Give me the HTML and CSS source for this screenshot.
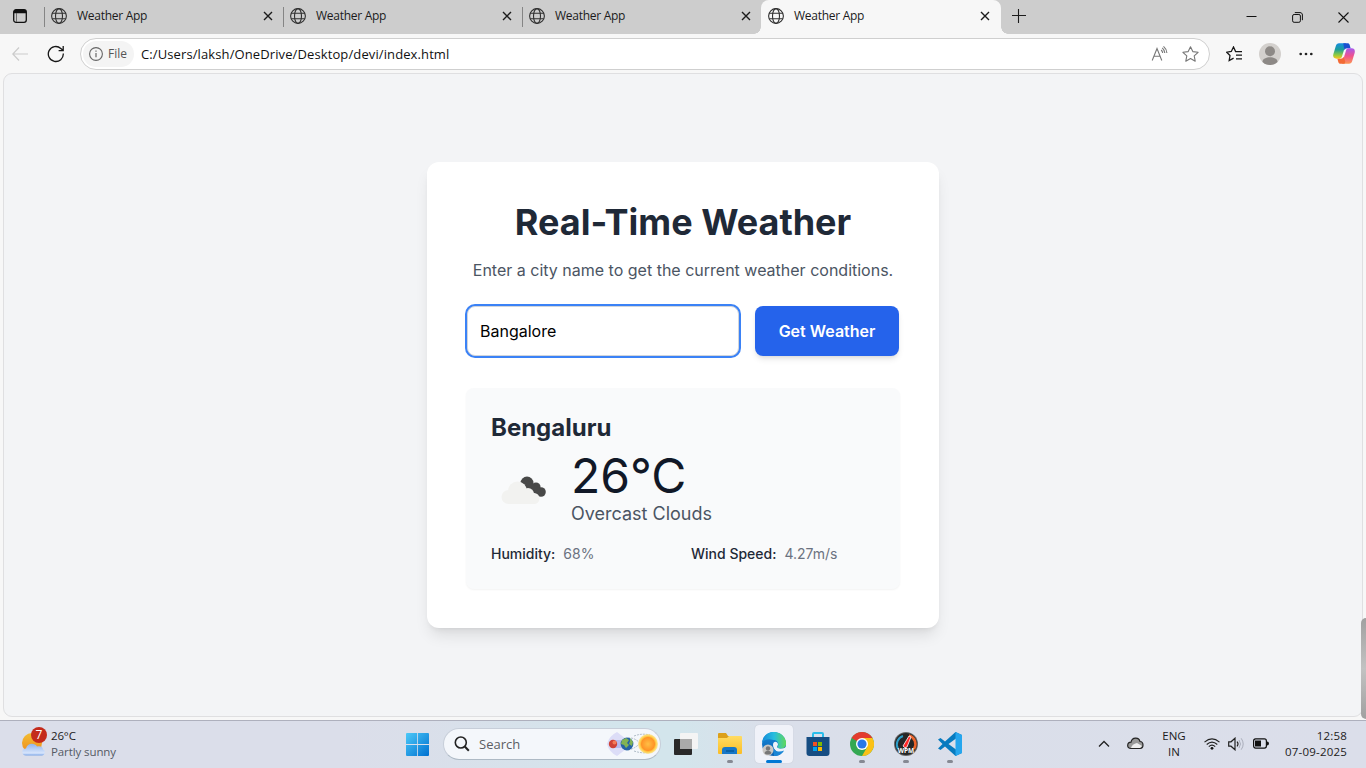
FILE: index.html
```html
<!DOCTYPE html>
<html lang="en">
<head>
<meta charset="utf-8">
<title>Weather App</title>
<link rel="stylesheet" href="styles.css">
</head>
<body>
<svg class="defs" width="0" height="0">
  <defs>
    <symbol id="globe" viewBox="0 0 16 16"><g fill="none" stroke="#303030" stroke-width="1.1"><circle cx="8" cy="8" r="7.4"/><ellipse cx="8" cy="8" rx="3.5" ry="7.4"/><path d="M1.2 5.3h13.6M1.2 10.7h13.6"/></g></symbol>
    <symbol id="close" viewBox="0 0 10 10"><path d="M1 1l8 8M9 1l-8 8" stroke="#1b1b1b" stroke-width="1.4" fill="none"/></symbol>
    <linearGradient id="win" x1="0" y1="0" x2="1" y2="1"><stop offset="0" stop-color="#4cc9f8"/><stop offset="1" stop-color="#0070d0"/></linearGradient>
    <linearGradient id="gold" x1="0" y1="0" x2="0" y2="1"><stop offset="0" stop-color="#ffdc63"/><stop offset="1" stop-color="#fbbd25"/></linearGradient>
    <linearGradient id="edgeA" x1="0" y1="0" x2="1" y2="0"><stop offset="0" stop-color="#168ad8"/><stop offset=".5" stop-color="#27bddf"/><stop offset="1" stop-color="#62d957"/></linearGradient>
    <linearGradient id="edgeB" x1="0" y1="0" x2="0" y2="1"><stop offset="0" stop-color="#168bdc"/><stop offset="1" stop-color="#0a5fb0"/></linearGradient>
    <radialGradient id="sun"><stop offset="0" stop-color="#ffbf45"/><stop offset=".65" stop-color="#ff9428"/><stop offset=".8" stop-color="#ffd04b"/><stop offset="1" stop-color="#ffdf77" stop-opacity=".7"/></radialGradient>
    <linearGradient id="cloud" x1="0" y1="0" x2="0" y2="1"><stop offset="0" stop-color="#8fb3ec"/><stop offset=".8" stop-color="#d7e5fc"/><stop offset="1" stop-color="#79a4e6"/></linearGradient>
    <linearGradient id="partSun" x1="0" y1="0" x2="0" y2="1"><stop offset="0" stop-color="#f2bd32"/><stop offset="1" stop-color="#ef8b1d"/></linearGradient>
    <linearGradient id="cpA" x1="0" y1="0" x2="0" y2="1"><stop offset="0" stop-color="#178de1"/><stop offset=".4" stop-color="#1b9d9b"/><stop offset=".75" stop-color="#8ecb40"/><stop offset="1" stop-color="#ffc51c"/></linearGradient>
    <linearGradient id="cpB" x1="0" y1="0" x2="0" y2="1"><stop offset="0" stop-color="#a659ee"/><stop offset=".5" stop-color="#f0528d"/><stop offset="1" stop-color="#fc9754"/></linearGradient>
  </defs>
</svg>
<div class="desktop">
  <header class="tabstrip">
    <div class="tab-menu"><svg width="14" height="14" viewBox="0 0 14 14"><rect x=".7" y=".7" width="12.6" height="12.6" rx="2.3" fill="none" stroke="#111" stroke-width="1.3"/><path d="M.7 4.3V3C.7 1.5 1.5.7 3 .7h8c1.500 0 2.300.8 2.300 2.300v1.300z" fill="#111"/><path d="M3.500 4v9" stroke="#555" stroke-width=".8"/></svg></div>
    <div class="tab"><svg class="globe"><use href="#globe"/></svg><span>Weather App</span><svg class="close"><use href="#close"/></svg></div>
    <div class="tab"><svg class="globe"><use href="#globe"/></svg><span>Weather App</span><svg class="close"><use href="#close"/></svg></div>
    <div class="tab"><svg class="globe"><use href="#globe"/></svg><span>Weather App</span><svg class="close"><use href="#close"/></svg></div>
    <div class="tab active"><svg class="globe"><use href="#globe"/></svg><span>Weather App</span><svg class="close"><use href="#close"/></svg></div>
    <svg class="plus" width="14" height="14" viewBox="0 0 14 14"><path d="M6.500 0v14M0 6.500h14" stroke="#1b1b1b" stroke-width="1.1"/></svg>
    <div class="window-controls">
      <svg width="11" height="11" viewBox="0 0 11 11"><path d="M.5 4.500h10" stroke="#111"/></svg>
      <svg width="11" height="11" viewBox="0 0 11 11"><g fill="none" stroke="#111"><rect x=".6" y="2.500" width="7.800" height="7.800" rx="1.500"/><path d="M2.800.6H8c1.500 0 2.400.9 2.400 2.400v5.200"/></g></svg>
      <svg width="11" height="11" viewBox="0 0 11 11"><path d="M.5.5l10 10M10.500.5l-10 10" stroke="#111" stroke-width="1.100"/></svg>
    </div>
  </header>

  <div class="toolbar">
    <svg class="back" width="16" height="14" viewBox="0 0 16 14"><path d="M7 .5L.8 7 7 13.500M1 7h15" fill="none" stroke="#cbcbcb" stroke-width="1.200"/></svg>
    <svg class="reload" width="18" height="18" viewBox="0 0 18 18"><path d="M16.300 8.500A7.500 7.500 0 1 1 13.800 3.400L16 5.300M16.200 1v4.600h-4.600" fill="none" stroke="#171717" stroke-width="1.300"/></svg>
    <div class="address">
      <div class="file-chip"><svg width="14" height="14" viewBox="0 0 14 14"><circle cx="7" cy="7" r="6.400" fill="none" stroke="#666" stroke-width="1.100"/><path d="M7 6v4.300M7 3.500v1.300" stroke="#666" stroke-width="1.200"/></svg><span>File</span></div>
      <span class="url">C:/Users/laksh/OneDrive/Desktop/devi/index.html</span>
      <svg class="read" width="17" height="16" viewBox="0 0 17 16"><g fill="none" stroke="#777" stroke-width="1.100"><path d="M1.200 14.500L6 2.500l4.800 12M2.900 10.300h6.200M10.200 4q1.300 1.200 1.500 3M11.200 1.900q2.300 2 2.600 5.100M12.500.4q3.100 2.600 3.400 6.600"/></g></svg>
      <svg class="star" width="17" height="16" viewBox="0 0 17 16"><path d="M8.500.8l2.300 4.800 5.300.7-3.900 3.600 1 5.300-4.700-2.600-4.700 2.600 1-5.300L.9 6.300l5.300-.7z" fill="none" stroke="#777" stroke-width="1.100" stroke-linejoin="round"/></svg>
    </div>
    <div class="tools">
      <svg width="17" height="16" viewBox="0 0 17 16"><path d="M10.800 5.600H9.600L7.500 1 5.300 5.500.7 6.200 4 9.500l-.8 5 4.400-2.300M10.800 5.600H16M10 9.200h6M10 12.800h6" fill="none" stroke="#161616" stroke-width="1.300"/></svg>
      <svg width="22" height="22" viewBox="0 0 22 22"><circle cx="11" cy="11" r="11" fill="#d3d0cd"/><circle cx="11" cy="8.300" r="5" fill="#8d8986"/><path d="M3.500 19c-.5-6.500 15.500-6.500 15 0-3.700 4-11.300 4-15 0z" fill="#8d8986"/></svg>
      <svg width="14" height="4" viewBox="0 0 14 4"><g fill="#222"><circle cx="1.700" cy="2" r="1.350"/><circle cx="7" cy="2" r="1.350"/><circle cx="12.300" cy="2" r="1.350"/></g></svg>
      <svg width="22" height="21" viewBox="0 0 22 21"><path d="M6 .3h7L9 13.600c-.5 1.500-1.300 2.100-2.800 2.100H3.500C.6 15.700-.3 13.700.4 11L2.800 3C3.400 1.200 4.300.3 6 .3z" fill="url(#cpA)"/><path d="M10.300.2h4.200c1.200 0 1.900.6 2.200 1.800l.9 3.300h-3.300c-1.400 0-2.400.7-2.900 2z" fill="#1a50cf"/><path d="M16 20.700H9l4-13.300c.5-1.500 1.300-2.100 2.800-2.100h2.700c2.900 0 3.800 2 3.100 4.700L19.200 18c-.6 1.800-1.500 2.700-3.200 2.700z" fill="url(#cpB)"/><path d="M4.400 15.700h3.300c1.400 0 2.400-.7 2.900-2l1.700 5-.8 2H7.500c-1.200 0-1.900-.6-2.200-1.800z" fill="#f36a35"/></svg>
    </div>
  </div>

  <main class="viewport">
    <section class="card">
      <h1>Real-Time Weather</h1>
      <p class="intro">Enter a city name to get the current weather conditions.</p>
      <form class="search-form">
        <input class="city-input" type="text" value="Bangalore">
        <button class="submit" type="button">Get Weather</button>
      </form>
      <div class="result">
        <h2>Bengaluru</h2>
        <div class="conditions">
          <svg width="64" height="64" viewBox="0 0 64 64"><g fill="#484848"><circle cx="36" cy="25" r="6.500"/><circle cx="45" cy="29" r="4.600"/><circle cx="50" cy="34" r="4.800"/><path d="M36 22l14 9-2 7-14-8z"/></g><g fill="#f2f2f0"><circle cx="17.500" cy="39" r="7"/><circle cx="26.500" cy="33" r="9.500"/><circle cx="37" cy="36" r="6"/><circle cx="43" cy="40.500" r="5.500"/><path d="M17 34h25v12H17z"/></g></svg>
          <div><div class="temperature">26°C</div><div class="description">Overcast Clouds</div></div>
        </div>
        <div class="details">
          <div><span class="label">Humidity:</span><span>68%</span></div>
          <div><span class="label">Wind Speed:</span><span>4.27m/s</span></div>
        </div>
      </div>
    </section>
    <div class="side-handle"></div>
  </main>

  <footer class="taskbar">
    <div class="widget">
      <svg width="26" height="30" viewBox="0 0 26 30"><circle cx="11" cy="16" r="10" fill="url(#partSun)"/><path d="M5 28.500c-5 0-5-7 0-7 1-6 9-6 11-2 4-1 6 1 6 3 3 1 2 6-1 6z" fill="url(#cloud)"/><circle cx="18" cy="8" r="8" fill="#c42b1c"/><text x="18" y="12.200" text-anchor="middle" fill="#fff" font-size="12">7</text></svg>
      <div class="widget-text"><span>26°C</span><span class="muted">Partly sunny</span></div>
    </div>
    <div class="start"><svg width="23" height="23" viewBox="0 0 23 23"><path d="M1 0h10.100v11.100H0V1q0-1 1-1zM11.900 0H22q1 0 1 1v10.100H11.900zM0 11.900h11.100V23H1q-1 0-1-1zM11.900 11.900H23V22q0 1-1 1H11.900z" fill="url(#win)"/></svg></div>
    <div class="search">
      <svg width="16" height="16" viewBox="0 0 16 16"><circle cx="6.800" cy="6.500" r="5.500" fill="none" stroke="#222" stroke-width="1.600"/><path d="M10.800 10.500l4 4.300" stroke="#222" stroke-width="2"/></svg>
      <span>Search</span>
      <svg class="planets" width="53" height="26" viewBox="0 0 53 26"><path d="M1 13Q3 5 11 1l13 10q2 2 0 4L11 25Q3 21 1 13z" fill="#d6d6f6" opacity=".8"/><path d="M8 9h14v8H8z" fill="#9ca4e5" opacity=".6"/><circle cx="7" cy="13" r="4.200" fill="#ce4337"/><circle cx="8.500" cy="11.500" r="2" fill="#f47b57"/><path d="M22 7q11-1 18 15M22 19q11-2 18-15M28 20q9 3 16 1M28 5q8-3 16-1" fill="none" stroke="#94a4b1" stroke-width=".7" stroke-dasharray="2 1"/><circle cx="21" cy="13" r="6.400" fill="#2563a5"/><path d="M16 9l4-2 3 2-2 3 2 2-3 3-2-3-3-1zm8-2l3 4-1 4-3-2 1-3z" fill="#82b354"/><circle cx="42" cy="13" r="10" fill="url(#sun)"/></svg>
    </div>
    <nav class="apps">
      <div class="app"><svg width="24" height="24" viewBox="0 0 24 24"><rect x="0" y="7" width="18" height="16" rx="1" fill="#292929"/><rect x="6" y="1" width="18" height="16" rx="1" fill="#f4f4f4"/><path d="M6 7h12v10H6z" fill="#aaa"/></svg></div>
      <div class="app running"><svg width="24" height="24" viewBox="0 0 24 24"><path d="M0 2q0-1 1-1h7l2 3h13v5H0z" fill="#dca01a"/><path d="M0 6h9l2-2h12q1 0 1 1v16q0 1-1 1H1q-1 0-1-1z" fill="url(#gold)"/><path d="M4 22v-4q0-3 3-3h9q3 0 3 3v4z" fill="#1677c8"/><path d="M8 19h8" stroke="#075a9c" stroke-width="1.500"/></svg></div>
      <div class="app current"><svg width="24" height="24" viewBox="0 0 24 24"><circle cx="12" cy="12" r="12" fill="url(#edgeB)"/><path d="M0 11C1 2 8-1 14 .2 21 1 26 9 23.500 14c-2 4-8 3-8 1 2-3 0-7-4-7C6 6 2 8 0 11z" fill="url(#edgeA)"/><path d="M11 13c0-4 4-4 5-1 0 2-2 3 0 4 2 1.500 6 .5 8-1v4l-3 3c-4 0-10-4-10-9z" fill="#edf3fa"/><path d="M11 14c0 5 6 7 11 4.500-2 4-6 5.500-10 5.500z" fill="#1a86d6"/><circle cx="6" cy="18" r="5.500" fill="#c9c7c4"/><circle cx="6" cy="16.500" r="2.200" fill="#777"/><path d="M2.500 21c1-3 6-3 7 0-1 2-6 2-7 0z" fill="#777"/></svg></div>
      <div class="app"><svg width="24" height="24" viewBox="0 0 24 24"><path d="M7 6V2q0-1 1-1h8q1 0 1 1v4" fill="none" stroke="#29bdea" stroke-width="2"/><path d="M.5 5h23v16q0 3-3 3h-17q-3 0-3-3z" fill="#164d82"/><path d="M7 10h4v4H7z" fill="#f25022"/><path d="M12 10h4v4h-4z" fill="#7fba00"/><path d="M7 15h4v4H7z" fill="#00a4ef"/><path d="M12 15h4v4h-4z" fill="#ffb900"/></svg></div>
      <div class="app running"><svg width="24" height="24" viewBox="0 0 24 24"><circle cx="12" cy="12" r="12" fill="#34a853"/><path d="M12 12L1.600 6A12 12 0 0 1 22.400 6z" fill="#e33b2e"/><path d="M12 6h10.400A12 12 0 0 1 12 24l5.200-9z" fill="#fbc116"/><circle cx="12" cy="12" r="6" fill="#fff"/><circle cx="12" cy="12" r="4.600" fill="#2877e8"/></svg></div>
      <div class="app running"><svg width="24" height="24" viewBox="0 0 24 24"><circle cx="12" cy="12" r="12" fill="#666"/><circle cx="12" cy="12" r="11" fill="#262626"/><path d="M4 17A9 9 0 0 1 9 4" fill="none" stroke="#2e9ec9" stroke-width="2"/><path d="M15 3.500A9 9 0 0 1 20 17" fill="none" stroke="#ee642b" stroke-width="2.500"/><path d="M15 4l2 1-4 10q-2 2-4-1z" fill="#ff2828" stroke="#fff" stroke-width=".8"/><text x="12" y="21" text-anchor="middle" fill="#fff" font-size="6.500" font-weight="700">WPM</text></svg></div>
      <div class="app running"><svg width="24" height="24" viewBox="0 0 24 24"><path d="M17.500 0L24 3v18l-6.500 3L7 14.500 2.500 18 0 16.500 4.500 12 0 7.500 2.500 6 7 9.500zM18 6.500L10.500 12l7.500 5.500z" fill="#087bbf" fill-rule="evenodd"/><path d="M17.500 0L24 3v18l-6.500 3z" fill="#25a6ee"/></svg></div>
    </nav>
    <div class="tray">
      <svg width="12" height="8" viewBox="0 0 12 8"><path d="M1 6.500l5-5 5 5" fill="none" stroke="#222" stroke-width="1.300"/></svg>
      <svg class="tray-cloud" width="17" height="13" viewBox="0 0 17 13"><path d="M4 11.500C-.5 11.500-.3 5.500 4 5.200 5-.2 12-.2 13 4.500c4 .3 4 7 0 7z" fill="#999" stroke="#222" stroke-width="1.200"/><path d="M4 11Q5 7 10 6l5 3-2 2z" fill="#eee"/></svg>
      <div class="language"><span>ENG</span><span>IN</span></div>
      <svg class="wifi" width="16" height="12" viewBox="0 0 16 12"><g fill="none" stroke="#222" stroke-width="1.100"><path d="M.5 4.200Q8-2.400 15.500 4.200M2.700 6.500Q8 1.800 13.300 6.500M4.800 8.700Q8 5.700 11.200 8.700"/></g><circle cx="8" cy="10.300" r="1.400" fill="#111"/></svg>
      <svg class="speaker" width="17" height="14" viewBox="0 0 17 14"><path d="M.7 4.800H3L7 1.200v11.600L3 9.200H.7zM9 4.700q2 2.300 0 4.600" fill="none" stroke="#222" stroke-width="1.200"/><path d="M11 3q3 4 0 8M13.200 1.300q4 5.700 0 11.400" fill="none" stroke="#aaaebb"/></svg>
      <svg class="battery" width="16" height="11" viewBox="0 0 16 11"><rect x=".6" y=".9" width="12.800" height="9.200" rx="2" fill="none" stroke="#111" stroke-width="1.200"/><path d="M2 2.500h6v6H2z" fill="#111"/><path d="M14 3.500q2 0 2 2t-2 2z" fill="#111"/></svg>
      <div class="clock"><span>12:58</span><span>07-09-2025</span></div>
    </div>
  </footer>
</div>
</body>
</html>
```
FILE: styles.css
```css
* { box-sizing: border-box; }
body { margin: 0; overflow: hidden; font: 12px/16px "Open Sans", "Noto Sans", sans-serif; color: #1b1b1b; }
svg { display: block; flex: none; }
.defs { position: absolute; }
.desktop { width: 1366px; height: 768px; display: flex; flex-direction: column; background: #f7f7f7; }

.tabstrip { height: 34px; flex: none; display: flex; background: #cdcdcd; }
.tab-menu { width: 44px; padding: 9px 0 0 13px; }
.tab { width: 239px; display: flex; align-items: center; padding: 0 10px 2px 6px; background: linear-gradient(#858585, #858585) 0 7px / 1px 20px no-repeat; letter-spacing: -.28px; }
.tab span { margin-left: 10px; flex: 1; }
.tab .globe { width: 16px; height: 16px; margin-left: 1px; }
.tab .close { width: 10px; height: 10px; }
.tab.active { width: 240px; padding-right: 11px; background: #f7f7f7; border-radius: 8px 8px 0 0; position: relative; }
.tab.active::before, .tab.active::after { content: ""; position: absolute; bottom: 0; width: 7px; height: 7px; }
.tab.active::before { left: -7px; background: radial-gradient(circle at 0 0, transparent 6.5px, #f7f7f7 7px); }
.tab.active::after { right: -7px; background: radial-gradient(circle at 100% 0, transparent 6.5px, #f7f7f7 7px); }
.plus { margin: 9px 0 0 11px; }
.window-controls { display: flex; gap: 35px; margin-left: auto; padding: 12px 17px 0 0; }

.toolbar { height: 39px; flex: none; display: flex; align-items: center; padding: 0 11px 0 12px; }
.reload { margin-left: 19px; }
.address { width: 1130px; height: 32px; margin-left: 15px; display: flex; align-items: center; border: 1px solid #cfcfcf; border-radius: 16px; background: #fff; padding: 0 10px 0 2px; }
.file-chip { width: 51px; height: 26px; display: flex; align-items: center; gap: 5px; padding-left: 6px; border-radius: 13px; background: #f4f4f4; color: #555; }
.url { margin-left: 7px; flex: 1; color: #111; font-size: 13px; letter-spacing: .11px; }
.star { margin-left: 14px; }
.tools { display: flex; align-items: center; margin-left: auto; }
.tools svg:nth-child(2) { margin-left: 16px; }
.tools svg:nth-child(3) { margin-left: 18px; }
.tools svg:nth-child(4) { margin-left: 20px; }

.viewport { position: relative; height: 644px; flex: none; margin: 0 3px; display: flex; justify-content: center; align-items: center; border: 1px solid #dfdfe1; border-radius: 9px; background: #f3f4f6; font-family: Inter, sans-serif; }
.card { width: 512px; height: 466px; padding: 40px; background: #fff; border-radius: 12px; box-shadow: 0 10px 15px -3px rgba(0,0,0,.1), 0 4px 6px -4px rgba(0,0,0,.1); }
h1 { margin: 0; color: #1f2937; font: 700 36px/40px Inter, sans-serif; text-align: center; }
.intro { margin: 16px 0 24px; color: #4b5563; font-size: 16px; line-height: 24px; text-align: center; }
.search-form { display: flex; gap: 16px; height: 50px; margin-bottom: 32px; }
.city-input { width: 272px; padding: 12px; border: 1px solid #d1d5db; border-radius: 8px; outline: none; box-shadow: 0 0 0 2px #3b82f6; font: 16px/24px Inter, sans-serif; color: #000; }
.submit { width: 144px; padding: 0; border: 0; border-radius: 8px; background: #2563eb; color: #fff; font: 600 16px/24px Inter, sans-serif; box-shadow: 0 4px 6px -1px rgba(0,0,0,.1), 0 2px 4px -2px rgba(0,0,0,.1); }
.result { height: 201px; margin: 0 -1px; padding: 24px 25px; border-radius: 8px; background: #f9fafb; box-shadow: 0 1px 2px rgba(0,0,0,.05); }
h2 { margin: 0 0 8px; color: #1f2937; font: 700 24px/32px Inter, sans-serif; }
.conditions { display: flex; align-items: center; gap: 16px; height: 76px; }
.temperature { color: #111827; font-size: 48px; line-height: 48px; }
.description { color: #4b5563; font-size: 18px; line-height: 28px; }
.details { display: grid; grid-template-columns: 1fr 1fr; gap: 16px; margin-top: 16px; color: #6b7280; font-size: 14px; line-height: 20px; }
.label { margin-right: 8px; color: #1f2937; font-weight: 500; }
.side-handle { position: absolute; right: -4px; bottom: -3px; width: 5px; height: 101px; border-radius: 5px 0 0 5px; background: linear-gradient(#a0a0a0, #c2c2c2 50%, #a0a0a0); }

.taskbar { height: 48px; margin-top: auto; padding-bottom: 2px; display: flex; align-items: center; border-top: 1px solid #aeb0bd; background: linear-gradient(90deg, #dbdeea 0 25%, #dadfea 31%, #d3e5ec 45%, #d3e5ec 50%, #dadfea 56%, #dbdeea); }
.widget { display: flex; align-items: center; width: 405px; padding-left: 21px; }
.widget svg { margin-top: -4px; }
.widget-text { display: flex; flex-direction: column; margin-left: 4px; font-size: 11.5px; letter-spacing: -.15px; }
.muted { color: #555a64; letter-spacing: -.1px; }
.start { width: 38px; padding-left: 1px; }
.start svg { margin-top: 1px; }
.search { width: 218px; height: 32px; display: flex; align-items: center; padding: 0 1px 0 10px; border: 1px solid #c7ced9; border-bottom-color: #aebac5; border-radius: 16px; background: #f4f7fb; color: #5b5e63; font-size: 13px; }
.search > span { margin-left: 9px; }
.planets { margin-left: auto; }
.apps { display: flex; gap: 6px; margin-left: 6px; }
.app { position: relative; width: 38px; height: 38px; display: flex; align-items: center; justify-content: center; border-radius: 4px; }
.app.running::after, .app.current::after { content: ""; position: absolute; bottom: 0; width: 6px; height: 3px; border-radius: 2px; background: #868993; }
.app.current { background: #f0f2f9; box-shadow: 0 0 1px #b2b6c2; }
.app.current::after { width: 16px; background: #0078d4; }
.tray { display: flex; align-items: center; margin-left: auto; padding-right: 19px; font-size: 11.5px; }
.tray-cloud { margin-left: 17px; }
.language { width: 26px; display: flex; flex-direction: column; align-items: center; margin-left: 17px; }
.wifi { margin-left: 17px; }
.speaker { margin-left: 8px; }
.battery { margin-left: 8px; }
.clock { width: 62px; margin-left: 16px; display: flex; flex-direction: column; align-items: flex-end; white-space: nowrap; letter-spacing: .2px; }
```
